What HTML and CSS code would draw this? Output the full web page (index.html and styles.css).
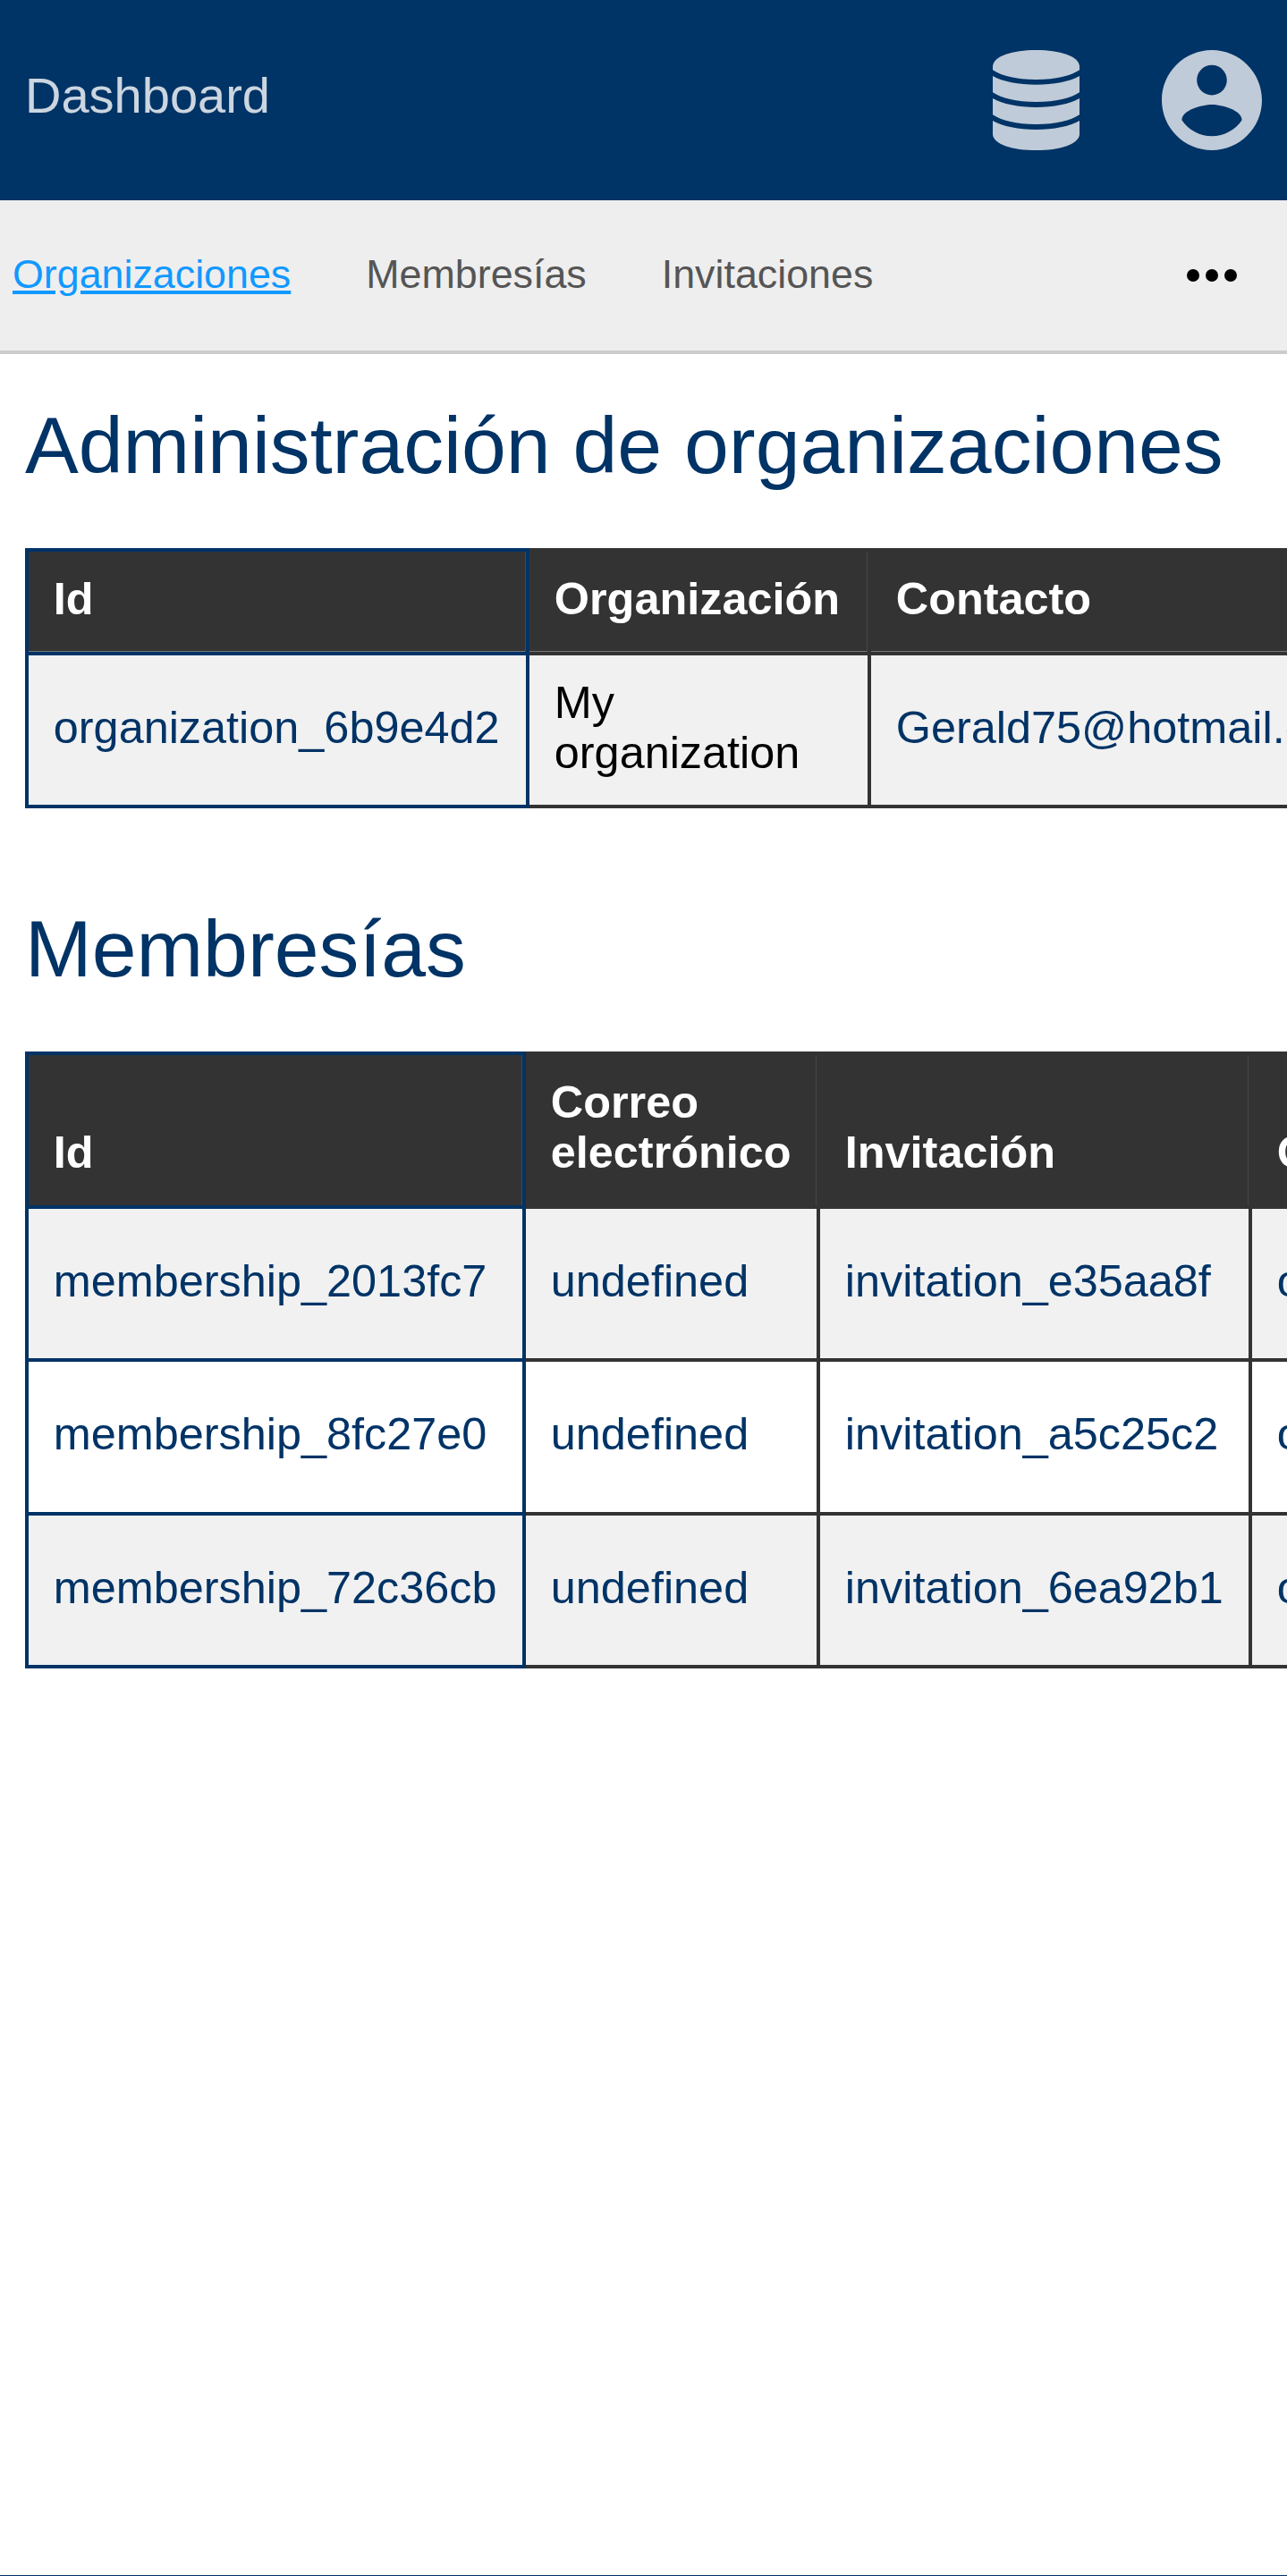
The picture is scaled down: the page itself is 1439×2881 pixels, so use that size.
FILE: index.html
```html
<!DOCTYPE html>
<html lang="es">
<head>
<meta charset="utf-8">
<title>Dashboard</title>
<link rel="stylesheet" href="styles.css">
</head>
<body>
<header class="topbar">
  <a class="brand">Dashboard</a>
  <div class="actions">
    <svg class="icon-db" viewBox="0 0 291 336"><path d="M0 53C4 20 65 0 145.500 0S287 20 291 53V67C262 87 212 99 145.500 99S29 87 0 67Z"/><path d="M0 87C33 106 87 116 145.500 116S258 106 291 87V142C262 162 212 174 145.500 174S29 162 0 142Z"/><path d="M0 162C33 181 87 192 145.500 192S258 181 291 162V217C262 237 212 249 145.500 249S29 237 0 217Z"/><path d="M0 237C33 256 87 267 145.500 267S258 256 291 237V284C287 316 225 336 145.500 336S4 316 0 284Z"/></svg>
    <svg class="icon-user" viewBox="2 2 20 20"><path d="M12 2C6.480 2 2 6.480 2 12s4.480 10 10 10 10-4.480 10-10S17.520 2 12 2zm0 3c1.660 0 3 1.340 3 3s-1.340 3-3 3-3-1.340-3-3 1.340-3 3-3zm0 14.200c-2.500 0-4.710-1.280-6-3.220.03-1.990 4-3.080 6-3.080 1.990 0 5.970 1.090 6 3.080-1.290 1.940-3.500 3.220-6 3.220z"/></svg>
  </div>
</header>
<nav class="tabs">
  <a class="tab active">Organizaciones</a>
  <a class="tab">Membresías</a>
  <a class="tab">Invitaciones</a>
  <svg class="more" viewBox="0 0 56 14"><circle cx="7" cy="7" r="7"/><circle cx="28" cy="7" r="7"/><circle cx="49" cy="7" r="7"/></svg>
</nav>
<main class="content">
  <section class="orgs">
    <h1 class="title">Administración de organizaciones</h1>
    <table class="grid">
      <colgroup><col class="o-id"><col class="o-name"><col class="o-contact"></colgroup>
      <thead><tr><th class="key">Id</th><th>Organización</th><th>Contacto</th></tr></thead>
      <tbody><tr><td class="key"><a>organization_6b9e4d2</a></td><td>My organization</td><td><a>Gerald75@hotmail.com</a></td></tr></tbody>
    </table>
  </section>
  <section class="members">
    <h1 class="title">Membresías</h1>
    <table class="grid">
      <colgroup><col class="m-id"><col class="m-mail"><col class="m-inv"><col class="m-org"></colgroup>
      <thead><tr><th class="key">Id</th><th>Correo electrónico</th><th>Invitación</th><th>Organización</th></tr></thead>
      <tbody>
        <tr><td class="key"><a>membership_2013fc7</a></td><td><a>undefined</a></td><td><a>invitation_e35aa8f</a></td><td><a>organization_6b9e4d2</a></td></tr>
        <tr><td class="key"><a>membership_8fc27e0</a></td><td><a>undefined</a></td><td><a>invitation_a5c25c2</a></td><td><a>organization_6b9e4d2</a></td></tr>
        <tr><td class="key"><a>membership_72c36cb</a></td><td><a>undefined</a></td><td><a>invitation_6ea92b1</a></td><td><a>organization_6b9e4d2</a></td></tr>
      </tbody>
    </table>
  </section>
</main>
<footer class="footer"></footer>
</body>
</html>
```
FILE: styles.css
```css
* { box-sizing: border-box; }
body {
  margin: 0;
  height: 2881px;
  overflow: hidden;
  display: flex;
  flex-direction: column;
  background: #fff;
  color: #000;
  font-family: "Liberation Sans", Arial, sans-serif;
}
.topbar {
  flex: none;
  height: 224px;
  padding: 0 28px;
  display: flex;
  align-items: center;
  justify-content: space-between;
  background: #003366;
}
.brand {
  font-size: 56px;
  line-height: 64px;
  margin-bottom: 10px;
  color: rgba(255, 255, 255, .8);
}
.actions { display: flex; gap: 92px; fill: rgba(255, 255, 255, .75); }
.icon-db { width: 97px; height: 112px; }
.icon-user { width: 112px; height: 112px; }
.tabs {
  flex: none;
  height: 172px;
  padding: 0 56px 0 14px;
  display: flex;
  align-items: center;
  gap: 84px;
  background: #eee;
  border-bottom: 4px solid #ccc;
  font-size: 44.8px;
  line-height: 52px;
}
.tab { color: #555; padding-bottom: 5px; }
.active { color: #1199ff; text-decoration: underline; }
.more { width: 56px; height: 14px; margin-left: auto; }
.content { flex: 1; min-height: 0; padding-left: 28px; overflow: hidden; }
.title {
  margin: 0;
  font-size: 89.6px;
  line-height: 102px;
  font-weight: 400;
  color: #003366;
}
.orgs .title { padding-top: 51px; height: 217px; }
.members .title { padding-top: 106px; height: 272px; }
.grid {
  border-collapse: collapse;
  table-layout: fixed;
  font-size: 50.4px;
  line-height: 56px;
}
.orgs .grid { width: 1560px; }
.members .grid { width: 1930px; }
.o-id { width: 560px; }
.o-name { width: 382px; }
.o-contact { width: 618px; }
.m-id { width: 556px; }
.m-mail { width: 329px; }
.m-inv { width: 483px; }
.m-org { width: 562px; }
th, td {
  border: 4px solid #333;
  text-align: left;
}
th {
  padding: 25px 27.8px 30.5px;
  background: #333;
  color: #fff;
  vertical-align: bottom;
  box-shadow: inset -1px 0 0 #484848;
}
.orgs th { box-shadow: inset -1px 0 0 #484848, inset 0 -1px 0 #777; }
td { height: 171.5px; padding: 0 27.8px 5px; vertical-align: middle; }
tbody tr:nth-child(odd) { background: #f1f1f1; }
.key { border-color: #003366; }
.grid a { color: #003366; }
.footer { flex: none; height: 1px; background: #003366; }
```
